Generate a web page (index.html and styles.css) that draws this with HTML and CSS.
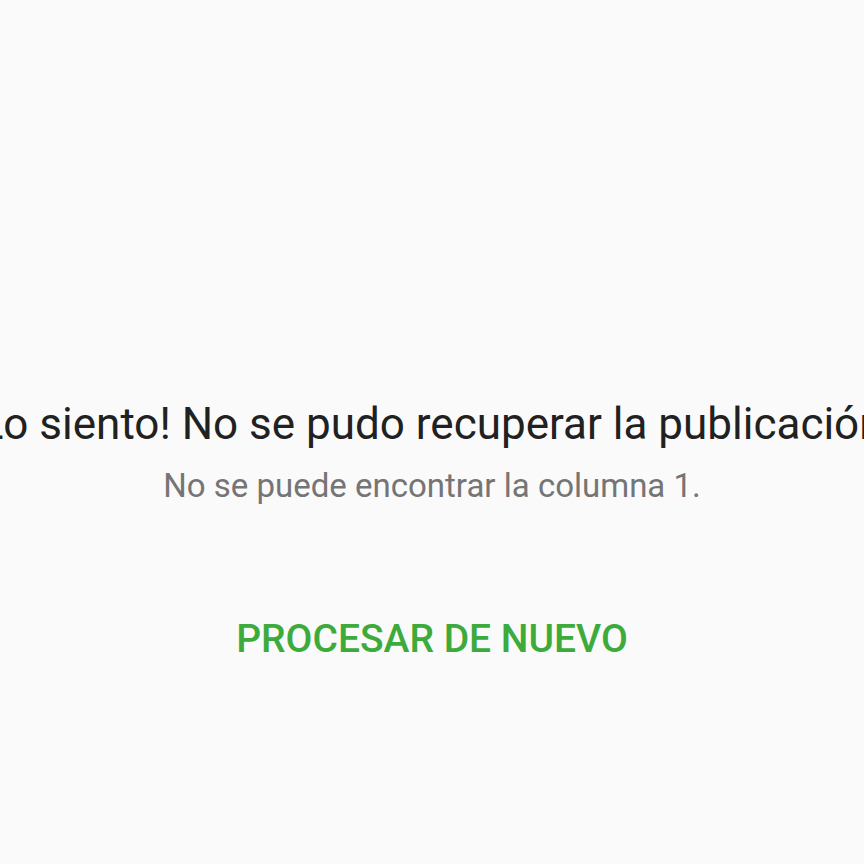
FILE: index.html
```html
<!DOCTYPE html>
<html lang="es">
<head>
<meta charset="utf-8">
<link rel="stylesheet" href="styles.css">
</head>
<body>
<main class="screen">
  <div class="message">
    <h1 class="title">¡Lo siento! No se pudo recuperar la publicación.</h1>
    <p class="subtitle">No se puede encontrar la columna 1.</p>
  </div>
  <button class="retry">PROCESAR DE NUEVO</button>
</main>
</body>
</html>
```
FILE: styles.css
```css
html, body {
  margin: 0;
  padding: 0;
  background: #fafafa;
  width: 864px;
  height: 864px;
  overflow: hidden;
}
.screen {
  width: 864px;
  height: 864px;
  display: flex;
  flex-direction: column;
  align-items: center;
  padding-top: 398px;
  box-sizing: border-box;
  font-family: Roboto, "Noto Sans", sans-serif;
}
.message {
  display: flex;
  flex-direction: column;
  align-items: center;
}
.title {
  margin: 0;
  font-size: 44px;
  font-weight: 400;
  line-height: 52px;
  color: #212121;
  white-space: nowrap;
}
.subtitle {
  margin: 16px 0 0;
  font-size: 33px;
  line-height: 40px;
  color: #757575;
  white-space: nowrap;
}
.retry {
  margin-top: 110px;
  border: 0;
  background: none;
  padding: 0;
  font-family: Roboto, sans-serif;
  font-weight: 500;
  font-size: 39px;
  line-height: 46px;
  color: #3dab3b;
}
```
